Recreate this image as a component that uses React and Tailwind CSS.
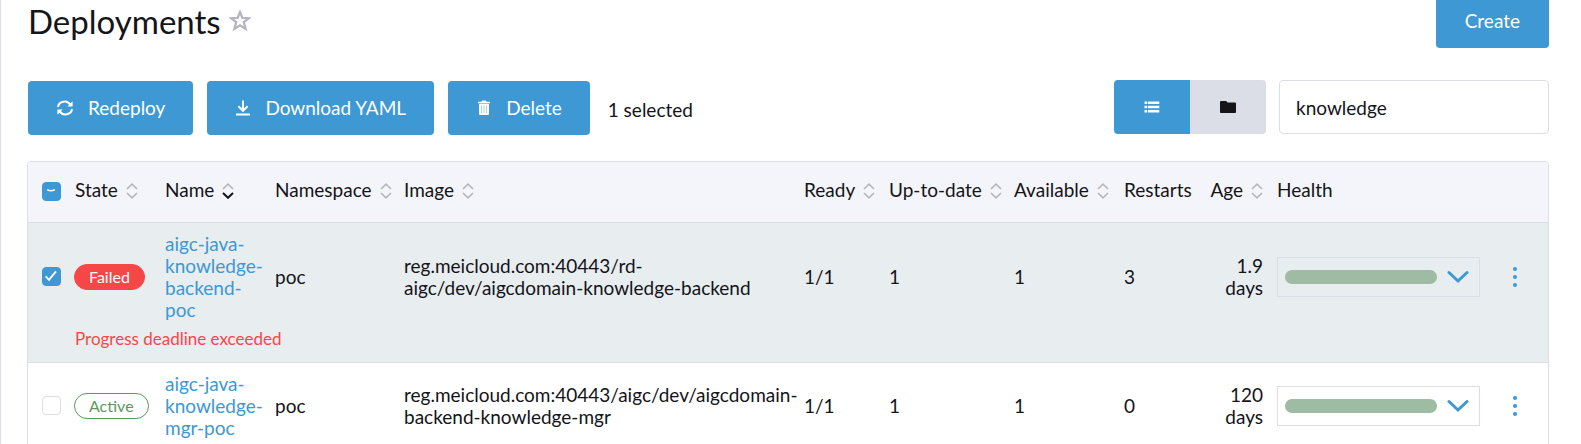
import React from 'react';

const columns = [
  { label: 'State', width: 'w-[90px]', sort: true },
  { label: 'Name', width: 'w-[110px]', sort: true, active: true },
  { label: 'Namespace', width: 'w-[129px]', sort: true },
  { label: 'Image', width: '', sort: true },
  { label: 'Ready', width: 'w-[85px]', sort: true },
  { label: 'Up-to-date', width: 'w-[125px]', sort: true },
  { label: 'Available', width: 'w-[110px]', sort: true },
  { label: 'Restarts', width: 'w-[84px]' },
  { label: 'Age', width: 'w-[69px]', sort: true, right: true },
  { label: 'Health', width: 'w-[217px]' },
];

const rows = [
  {
    state: 'Failed',
    name: 'aigc-java-knowledge-backend-poc',
    namespace: 'poc',
    image: 'reg.meicloud.com:40443/rd-aigc/dev/aigcdomain-knowledge-backend',
    ready: '1/1',
    upToDate: 1,
    available: 1,
    restarts: 3,
    age: '1.9 days',
    message: 'Progress deadline exceeded',
    selected: true,
  },
  {
    state: 'Active',
    name: 'aigc-java-knowledge-mgr-poc',
    namespace: 'poc',
    image: 'reg.meicloud.com:40443/aigc/dev/aigcdomain-backend-knowledge-mgr',
    ready: '1/1',
    upToDate: 1,
    available: 1,
    restarts: 0,
    age: '120 days',
  },
];

function StarIcon() {
  return (
    <svg viewBox="0 0 22 22" className="size-[22px]" fill="none" stroke="#b6b6c2" strokeWidth="2.3">
      <path d="M11 2 13.4 7.9 19.8 8.2 14.8 12.2 16.6 19 11 15.4 5.4 19 7.2 12.2 2.2 8.2 8.6 7.9Z" />
    </svg>
  );
}

function RefreshIcon() {
  return (
    <svg viewBox="0 0 18 16" className="h-4 w-[18px]" fill="none" stroke="currentColor" strokeWidth="2">
      <path d="M2 7A6.6 6.2 0 0 1 14.2 4.6M16 9A6.6 6.2 0 0 1 3.8 11.4" />
      <path d="M16.6 1.2V6.4H11.4ZM1.4 14.8V9.6H6.6Z" fill="currentColor" stroke="none" />
    </svg>
  );
}

function DownloadIcon() {
  return (
    <svg viewBox="0 0 16 16" className="size-4" fill="none" stroke="currentColor" strokeWidth="2">
      <path d="M8 0.5V10.6M3.4 6.2 8 10.8 12.6 6.2M1 14.4H15" />
    </svg>
  );
}

function TrashIcon() {
  return (
    <svg viewBox="0 0 16 16" className="size-4" fill="currentColor">
      <path d="M2 1.8H5.4L6.2 0.6H9.8L10.6 1.8H14V3.2H2Z" />
      <path d="M3 3.8H13V14Q13 15 12 15H4Q3 15 3 14Z" />
      <path d="M5.5 5.4V13.2M8 5.4V13.2M10.5 5.4V13.2" stroke="#3d98d3" strokeWidth="0.7" opacity="0.6" />
    </svg>
  );
}

function ListIcon() {
  return (
    <svg viewBox="0 0 16 12" className="h-3 w-4" fill="currentColor">
      <path d="M0.5 0.5H3.2V3H0.5ZM4 0.5H15.3V3H4ZM0.5 4.7H3.2V7.2H0.5ZM4 4.7H15.3V7.2H4ZM0.5 8.9H3.2V11.4H0.5ZM4 8.9H15.3V11.4H4Z" />
    </svg>
  );
}

function FolderIcon() {
  return (
    <svg viewBox="0 0 16 12" className="h-3 w-4" fill="currentColor">
      <path d="M1 0H6.2L7.6 1.6H15Q16 1.6 16 2.6V11Q16 12 15 12H1Q0 12 0 11V1Q0 0 1 0Z" />
    </svg>
  );
}

function SortIcon({ active }) {
  return (
    <svg viewBox="0 0 12 16" className="mt-[2px] h-4 w-3 shrink-0" fill="none" strokeWidth="1.6">
      <path d="M1 6 6 1.2 11 6" stroke="#b5b6bb" />
      <path d="M1 10 6 14.8 11 10" stroke={active ? '#141419' : '#b5b6bb'} strokeWidth={active ? 2 : 1.6} />
    </svg>
  );
}

function Checkbox({ label, checked, mixed }) {
  const on = checked || mixed;
  return (
    <label className="relative block size-[19px]">
      <input
        type="checkbox"
        aria-label={label}
        defaultChecked={on}
        className="block size-[19px] appearance-none rounded border border-[#dcdee7] bg-white checked:border-[#3d98d3] checked:bg-[#3d98d3]"
      />
      {on && (
        <svg viewBox="0 0 19 19" className="pointer-events-none absolute inset-0 size-[19px]" fill="none" stroke="white" strokeWidth="1.9">
          {mixed ? <path d="M5.2 7.6Q9 9.8 12.8 7.6" strokeWidth="1.6" /> : <path d="M3.6 9.4 7 12.8 14 4.4" />}
        </svg>
      )}
    </label>
  );
}

function ActionButton({ icon, children }) {
  return (
    <button className="flex h-[54px] items-center gap-[14px] rounded bg-[#3d98d3] px-7 text-white">
      {icon}
      {children}
    </button>
  );
}

function Health() {
  return (
    <button aria-label="Show health details" className="flex h-10 w-full items-center gap-[10px] border border-[#dcdee7] pr-[10px] pl-[7px]">
      <span className="h-[14px] flex-1 rounded-full bg-[#9ebba3]" />
      <svg viewBox="0 0 22 14" className="h-[14px] w-[22px]" fill="none" stroke="#3d98d3" strokeWidth="3" strokeLinecap="round">
        <path d="M2 2.5 11 11 20 2.5" />
      </svg>
    </button>
  );
}

function StateBadge({ state }) {
  const tone = state === 'Failed' ? 'border-[#f64747] bg-[#f64747] text-white' : 'border-[#5d995d] text-[#5d995d]';
  return <span className={`inline-block rounded-full border px-[14px] text-[16px] leading-6 ${tone}`}>{state}</span>;
}

function Row({ row }) {
  const tone = row.selected ? 'bg-[#e8edf0]' : 'bg-white';
  const cell = 'px-[7px] py-[10px]';
  return (
    <tbody className={`border-t border-[#dcdee7] ${tone}`}>
      <tr>
        <td className="pl-[14px]">
          <Checkbox label={`Select ${row.name}`} checked={row.selected} />
        </td>
        <td className="pl-[6px] whitespace-nowrap">
          <StateBadge state={row.state} />
        </td>
        <td className={cell}>
          <a href="#deployment" className="text-[#3d98d3]">{row.name}</a>
        </td>
        <td className={cell}>{row.namespace}</td>
        <td className={cell}>{row.image}</td>
        <td className={cell}>{row.ready}</td>
        <td className={cell}>{row.upToDate}</td>
        <td className={cell}>{row.available}</td>
        <td className={cell}>{row.restarts}</td>
        <td className={`${cell} text-right`}>{row.age}</td>
        <td className={cell}>
          <Health />
        </td>
        <td className="pl-5">
          <button aria-label={`Actions for ${row.name}`} className="flex h-8 w-4 items-center justify-center">
            <svg viewBox="0 0 4 20" className="h-5 w-1" fill="#3d98d3">
              <circle cx="2" cy="2" r="2" />
              <circle cx="2" cy="10" r="2" />
              <circle cx="2" cy="18" r="2" />
            </svg>
          </button>
        </td>
      </tr>
      {row.message && (
        <tr>
          <td />
          <td colSpan={11} className="px-[7px] pb-[15px] text-[17px] leading-4 text-[#f64747]">
            {row.message}
          </td>
        </tr>
      )}
    </tbody>
  );
}

export default function App() {
  return (
    <main className="h-screen overflow-hidden border-l border-[#dcdee7] bg-white pr-8 pl-[27px] font-['Lato',sans-serif] text-[19px] leading-[22px] text-[#141419]">
      <header className="flex h-12 items-end justify-between">
        <div className="flex h-[54px] items-center gap-2">
          <h1 className="text-[33px] leading-[54px]">Deployments</h1>
          <button aria-label="Add to favorites">
            <StarIcon />
          </button>
        </div>
        <button className="h-[54px] shrink-0 rounded bg-[#3d98d3] px-[29px] text-white">Create</button>
      </header>

      <div className="mt-8 flex h-[55px] justify-between">
        <div className="flex items-end gap-[14px]">
          <ActionButton icon={<RefreshIcon />}>Redeploy</ActionButton>
          <ActionButton icon={<DownloadIcon />}>Download YAML</ActionButton>
          <ActionButton icon={<TrashIcon />}>Delete</ActionButton>
          <span className="pb-[14px] pl-1">1 selected</span>
        </div>
        <div className="flex items-start gap-[13px]">
          <div className="flex overflow-hidden rounded">
            <button aria-label="Flat list" className="flex h-[54px] w-[76px] items-center justify-center bg-[#3d98d3] text-white">
              <ListIcon />
            </button>
            <button aria-label="Group by namespace" className="flex h-[54px] w-[76px] items-center justify-center bg-[#dcdee7]">
              <FolderIcon />
            </button>
          </div>
          <input
            type="search"
            aria-label="Filter"
            defaultValue="knowledge"
            className="h-[54px] w-[270px] appearance-none rounded border border-[#dcdee7] px-4"
          />
        </div>
      </div>

      <div className="mt-[26px] -ml-px overflow-hidden rounded border border-[#dcdee7]">
        <table className="w-full table-fixed border-collapse text-left">
          <thead className="bg-[#f4f5fa]">
            <tr className="h-[60px]">
              <th className="w-10 pl-[14px]">
                <Checkbox label="Select all" mixed />
              </th>
              {columns.map((c) => (
                <th key={c.label} className={`px-[7px] pb-[3px] font-normal whitespace-nowrap ${c.width}`}>
                  {c.sort ? (
                    <button className={`flex w-full items-center gap-2 ${c.right ? 'justify-end' : ''}`}>
                      {c.label}
                      <SortIcon active={c.active} />
                    </button>
                  ) : (
                    c.label
                  )}
                </th>
              ))}
              <th className="w-[61px]" aria-label="Actions" />
            </tr>
          </thead>
          {rows.map((row) => (
            <Row key={row.name} row={row} />
          ))}
        </table>
      </div>
    </main>
  );
}
